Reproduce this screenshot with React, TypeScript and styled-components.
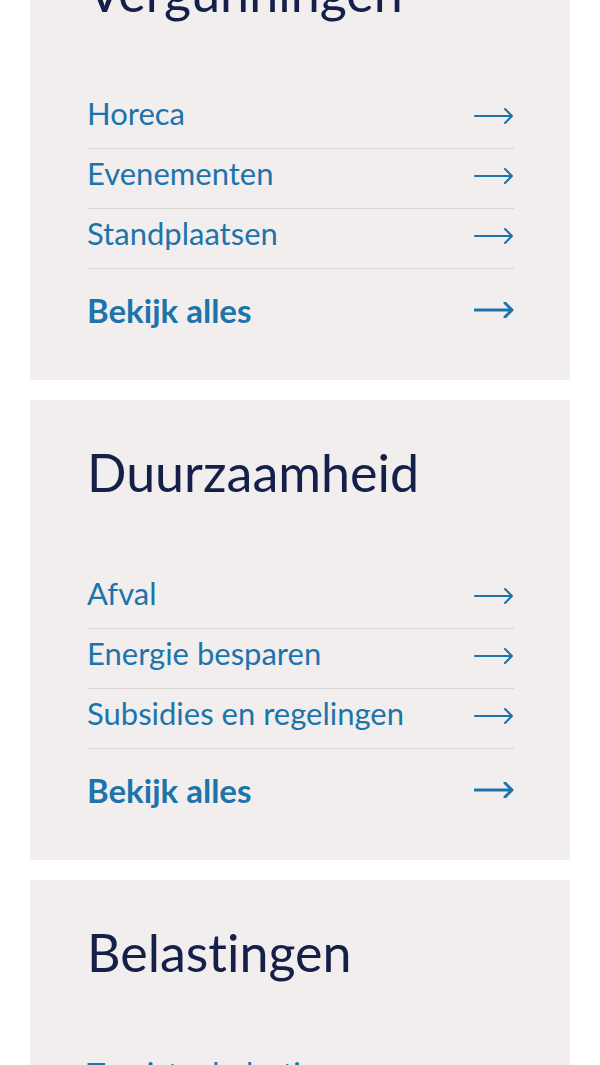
import React from 'react';
import styled, { createGlobalStyle } from 'styled-components';

const color = {
  card: '#f2eeee',
  link: '#1d74ab',
  title: '#14204a',
  divider: '#d9d5d5',
};

const GlobalStyle = createGlobalStyle({
  'html, body': {
    margin: 0,
    padding: 0,
    background: '#ffffff',
  },
  body: {
    fontFamily: 'Lato, "Noto Sans", sans-serif',
    fontVariantLigatures: 'no-common-ligatures',
    overflow: 'hidden',
  },
});

const Page = styled.main({
  display: 'flex',
  flexDirection: 'column',
  gap: '20px',
  padding: '0 30px',
  marginTop: '-80px',
});

const Card = styled.section({
  background: color.card,
  padding: '41px 56px 50px 57px',
  height: '460px',
  boxSizing: 'border-box',
});

const Title = styled.h2({
  margin: 0,
  fontSize: '52px',
  lineHeight: 1.2,
  fontWeight: 400,
  color: color.title,
});

const List = styled.ul({
  listStyle: 'none',
  margin: '66px 0 0',
  padding: 0,
});

const Item = styled.li({
  borderBottom: `1px solid ${color.divider}`,
});

const Link = styled.a<{ $bold?: boolean }>(({ $bold }) => ({
  display: 'flex',
  alignItems: 'center',
  justifyContent: 'space-between',
  color: color.link,
  textDecoration: 'none',
  fontSize: $bold ? '33px' : '31px',
  fontWeight: $bold ? 700 : 400,
  lineHeight: $bold ? '38px' : '36px',
  padding: $bold ? '22px 0 0' : '6px 0 17px',
  '& svg': {
    flexShrink: 0,
    marginTop: $bold ? '0' : '6px',
  },
}));

const Arrow = ({ bold }: { bold?: boolean }) => (
  <svg width="40" height="16" viewBox="0 0 40 16" fill="none">
    <path
      d="M1 8 H38 M31 1 L38 8 L31 15"
      stroke={color.link}
      strokeWidth={bold ? 3 : 2}
      strokeLinecap="round"
      strokeLinejoin="round"
    />
  </svg>
);

const sections = [
  { title: 'Vergunningen', links: ['Horeca', 'Evenementen', 'Standplaatsen'] },
  { title: 'Duurzaamheid', links: ['Afval', 'Energie besparen', 'Subsidies en regelingen'] },
  { title: 'Belastingen', links: ['Toeristenbelasting', 'Afvalstoffenheffing', 'OZB'] },
];

const App = () => (
  <>
    <GlobalStyle />
    <Page>
      {sections.map((section) => (
        <Card key={section.title}>
          <Title>{section.title}</Title>
          <List>
            {section.links.map((link) => (
              <Item key={link}>
                <Link href="#">
                  <span>{link}</span>
                  <Arrow />
                </Link>
              </Item>
            ))}
          </List>
          <Link href="#" $bold>
            <span>Bekijk alles</span>
            <Arrow bold />
          </Link>
        </Card>
      ))}
    </Page>
  </>
);

export default App;
